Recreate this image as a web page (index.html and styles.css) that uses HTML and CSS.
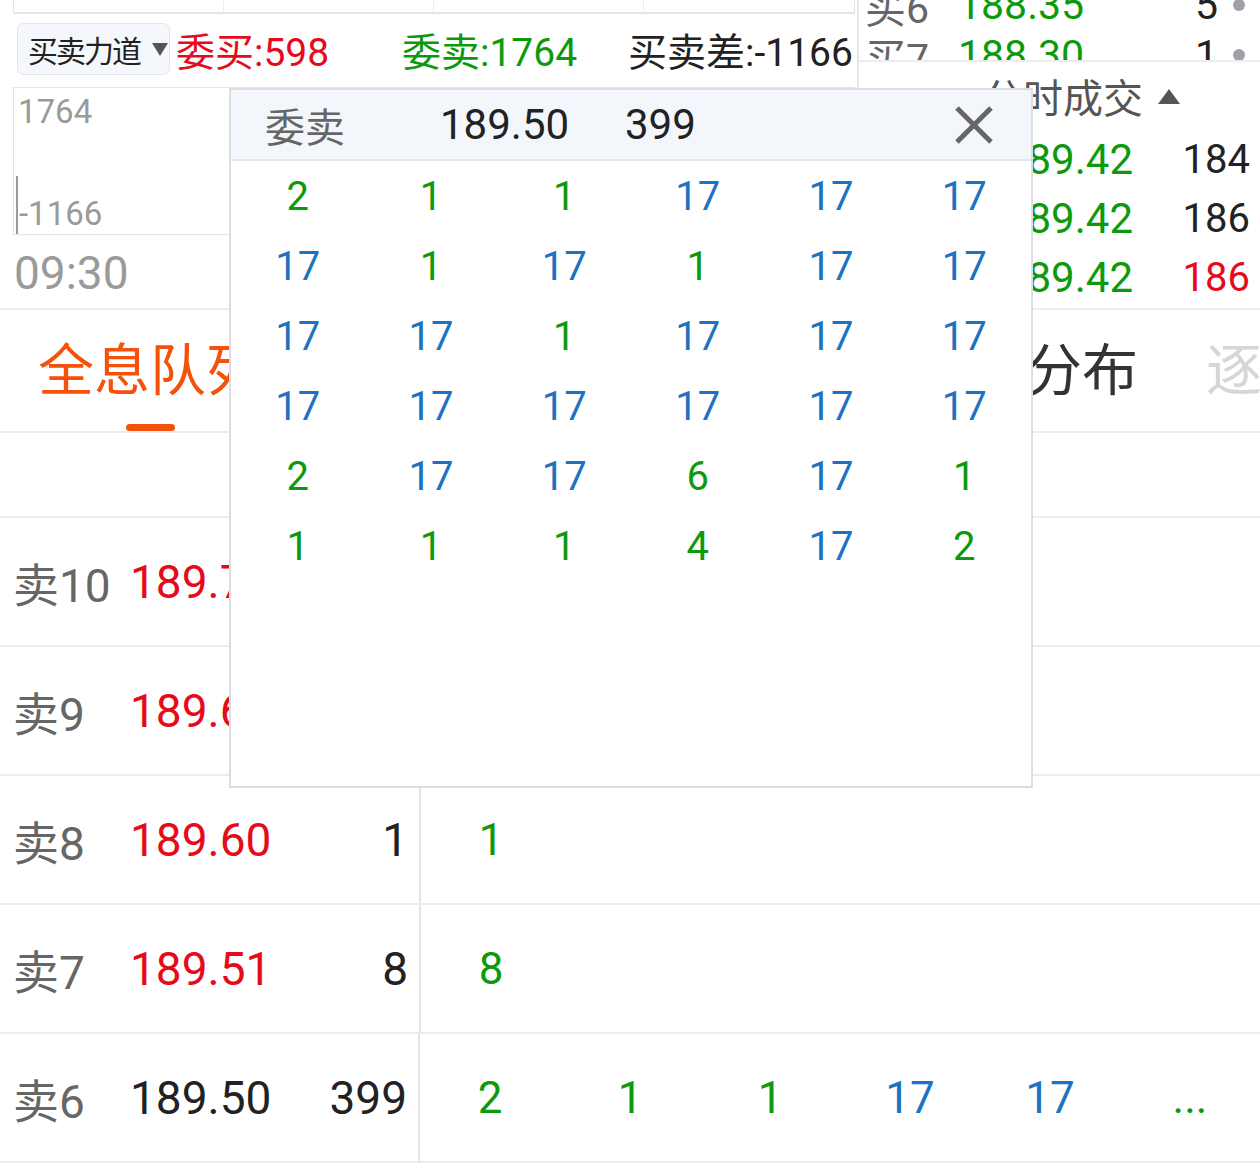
FILE: index.html
```html
<!DOCTYPE html>
<html lang="zh-CN">
<head>
<meta charset="UTF-8">
<meta name="viewport" content="width=device-width, initial-scale=1.0">
<title>全息队列</title>
<link rel="stylesheet" href="styles.css">
</head>
<body>
<div class="screen">

  <div class="top">
    <div class="chart-col">
      <div class="mini-chart"><span></span><span></span><span></span><span></span></div>

      <div class="force-row">
        <div class="picker">买卖力道<i class="caret"></i></div>
        <span class="stat up">委买:598</span>
        <span class="stat down">委卖:1764</span>
        <span class="stat">买卖差:-1166</span>
      </div>

      <div class="force-chart">
        <span class="axis-top">1764</span>
        <div class="axis-bottom"><i class="bar"></i>-1166</div>
      </div>

      <div class="time">09:30</div>
    </div>

    <div class="side">
      <div class="book">
        <div class="book-list">
          <div class="book-row"><span class="lbl">买6</span><span class="px down">188.35</span><span class="vol">5</span><i class="dot"></i></div>
          <div class="book-row"><span class="lbl">买7</span><span class="px down">188.30</span><span class="vol">1</span><i class="dot"></i></div>
        </div>
      </div>
      <div class="trades-head">分时成交<i class="tri"></i></div>
      <div class="trade"><span class="t">14:56</span><span class="px down">189.42</span><span class="vol">184</span></div>
      <div class="trade"><span class="t">14:56</span><span class="px down">189.42</span><span class="vol">186</span></div>
      <div class="trade"><span class="t">14:57</span><span class="px down">189.42</span><span class="vol up">186</span></div>
    </div>
  </div>

  <div class="tabs">
    <div class="tab active">全息队列</div>
    <div class="tab">委托明细</div>
    <div class="tab">资金流向</div>
    <div class="tab">挂单分布</div>
    <div class="tab faded">逐笔委托</div>
  </div>

  <div class="queue-head"></div>

  <div class="order-row">
    <div class="level"><span class="lbl">卖10</span><span class="px up">189.70</span><span class="vol">3</span></div>
    <div class="queue"><span class="q down">3</span></div>
  </div>
  <div class="order-row">
    <div class="level"><span class="lbl">卖9</span><span class="px up">189.68</span><span class="vol">2</span></div>
    <div class="queue"><span class="q down">2</span></div>
  </div>
  <div class="order-row">
    <div class="level"><span class="lbl">卖8</span><span class="px up">189.60</span><span class="vol">1</span></div>
    <div class="queue"><span class="q down">1</span></div>
  </div>
  <div class="order-row">
    <div class="level"><span class="lbl">卖7</span><span class="px up">189.51</span><span class="vol">8</span></div>
    <div class="queue"><span class="q down">8</span></div>
  </div>
  <div class="order-row">
    <div class="level"><span class="lbl">卖6</span><span class="px">189.50</span><span class="vol">399</span></div>
    <div class="queue">
      <span class="q down">2</span><span class="q down">1</span><span class="q down">1</span>
      <span class="q blue">17</span><span class="q blue">17</span><span class="q down">...</span>
    </div>
  </div>

  <!-- detail popup for 卖6 -->
  <div class="popup">
    <div class="pop-head">
      <span class="pop-title">委卖</span>
      <span class="pop-price">189.50</span>
      <span class="pop-vol">399</span>
      <svg class="close" width="40" height="40" viewBox="0 0 40 40">
        <path d="M3 3 L37 37 M37 3 L3 37" stroke="#666" stroke-width="5" fill="none"/>
      </svg>
    </div>
    <div class="pop-grid">
      <span class="down">2</span><span class="down">1</span><span class="down">1</span><span class="blue">17</span><span class="blue">17</span><span class="blue">17</span>
      <span class="blue">17</span><span class="down">1</span><span class="blue">17</span><span class="down">1</span><span class="blue">17</span><span class="blue">17</span>
      <span class="blue">17</span><span class="blue">17</span><span class="down">1</span><span class="blue">17</span><span class="blue">17</span><span class="blue">17</span>
      <span class="blue">17</span><span class="blue">17</span><span class="blue">17</span><span class="blue">17</span><span class="blue">17</span><span class="blue">17</span>
      <span class="down">2</span><span class="blue">17</span><span class="blue">17</span><span class="down">6</span><span class="blue">17</span><span class="down">1</span>
      <span class="down">1</span><span class="down">1</span><span class="down">1</span><span class="down">4</span><span class="blue">17</span><span class="down">2</span>
    </div>
  </div>

</div>
</body>
</html>
```

FILE: styles.css
```css
* { box-sizing: border-box; }
body { margin: 0; background: #fff; font-family: Roboto, "Noto Sans CJK SC", sans-serif; color: #222; }
.screen { position: relative; width: 1260px; height: 1172px; overflow: hidden; background: #fff; }

.up { color: #e60b1b; }
.down { color: #0c9a0c; }
.blue { color: #1d73c2; }

/* top: force chart + side book */
.top { display: flex; height: 310px; border-bottom: 2px solid #ececef; }
.chart-col { width: 857px; }
.side { flex: 1; border-left: 2px solid #e6e6ea; overflow: hidden; }

.mini-chart { margin-left: 13px; width: 842px; height: 14px; display: grid; grid-template-columns: repeat(4, 1fr);
  border: 1px solid #e4e4e8; border-top: none; border-bottom-width: 2px; }
.mini-chart span { border-right: 1px solid #ececef; }
.mini-chart span:last-child { border-right: none; }

.force-row { display: flex; align-items: center; height: 52px; margin-top: 9px; white-space: nowrap; }
.picker { display: flex; align-items: center; margin-left: 17px; width: 153px; height: 52px; padding-left: 10px;
  background: #f4f7fb; border: 1px solid #e2e6ec; border-radius: 7px; font-size: 30px; letter-spacing: -2px; color: #222; }
.caret { margin-left: 12px; width: 0; height: 0; border-left: 8px solid transparent; border-right: 8px solid transparent; border-top: 13px solid #555; }
.stat { font-size: 39px; }
.stat.up { margin-left: 6px; width: 226px; }
.stat.down { width: 226px; }

.force-chart { display: flex; flex-direction: column; justify-content: space-between; margin: 12px 0 0 13px; width: 842px; height: 148px;
  border: 1px solid #e4e4e8; color: #9a9a9a; font-size: 33px; line-height: 1; }
.axis-top { padding: 7px 0 0 4px; }
.axis-bottom { display: flex; align-items: flex-end; padding-left: 2px; }
.axis-bottom .bar { width: 2px; height: 58px; background: #9a9a9a; margin-right: 1px; }
.axis-bottom { padding-bottom: 4px; }
.axis-bottom .bar { margin-bottom: -4px; }

.time { height: 73px; padding: 2px 0 0 14px; font-size: 46px; line-height: 73px; color: #9a9a9a; }

.book { height: 62px; overflow: hidden; border-bottom: 2px solid #ececef; }
.book-list { margin-top: -20px; }
.book-row { display: flex; align-items: center; height: 50px; padding-left: 6px; font-size: 41px; white-space: nowrap; }
.book-row .lbl { width: 93px; color: #666; }
.book-row .px { flex: 1; }
.book-row .vol { color: #222; }
.book-row .dot { width: 12px; height: 12px; border-radius: 50%; background: #a0a0a6; margin: 0 15px 0 15px; }

.trades-head { display: flex; align-items: center; justify-content: center; height: 68px; padding-left: 44px; font-size: 40px; color: #555; }
.tri { margin-left: 15px; width: 0; height: 0; border-left: 11px solid transparent; border-right: 11px solid transparent; border-bottom: 15px solid #555; }
.trade { display: flex; align-items: center; height: 59px; white-space: nowrap; }
.trade .t { width: 100px; padding-left: 10px; font-size: 40px; color: #666; }
.trade .px { flex: 1; text-align: right; font-size: 42px; }
.trade .vol { width: 127px; padding-right: 10px; text-align: right; font-size: 40px; }

/* tabs */
.tabs { display: flex; gap: 68px; height: 123px; padding-left: 38px; border-bottom: 2px solid #ececef; overflow: hidden; white-space: nowrap; }
.tab { display: flex; flex-direction: column; align-items: center; flex-shrink: 0; padding-top: 33px; font-size: 56px; line-height: 56px; color: #333; }
.tab.active { color: #f4510b; }
.tab.active::after { content: ''; width: 49px; height: 7px; margin-top: 25px; border-radius: 4px; background: #f4510b; }
.tab.faded { color: #d6d6d6; }

.queue-head { height: 85px; border-bottom: 2px solid #ececef; }

/* order queue rows */
.order-row { display: flex; height: 129px; border-bottom: 2px solid #ececef; font-size: 46px; white-space: nowrap; }
.level { display: flex; align-items: center; width: 421px; padding: 0 11px 0 13px; border-right: 2px solid #e4e4e8; }
.level .lbl { width: 117px; color: #666; }
.level .px { flex: 1; }
.level .vol { color: #222; }
.queue { display: flex; align-items: center; }
.q { width: 140px; text-align: center; font-size: 44px; }

/* popup */
.popup { position: absolute; left: 229px; top: 88px; width: 804px; height: 700px; background: #fff; border: 2px solid #dadde2; }
.pop-head { display: flex; align-items: center; height: 71px; padding-left: 34px; background: #f3f7fc; border-bottom: 2px solid #e2e6eb; white-space: nowrap; }
.pop-title { width: 175px; font-size: 40px; color: #666; }
.pop-price { width: 185px; font-size: 42px; color: #222; }
.pop-vol { font-size: 42px; color: #222; }
.close { margin-left: auto; margin-right: 37px; }
.pop-grid { display: grid; grid-template-columns: repeat(6, 1fr); grid-auto-rows: 70px; align-items: center; text-align: center; font-size: 40px; }
```
